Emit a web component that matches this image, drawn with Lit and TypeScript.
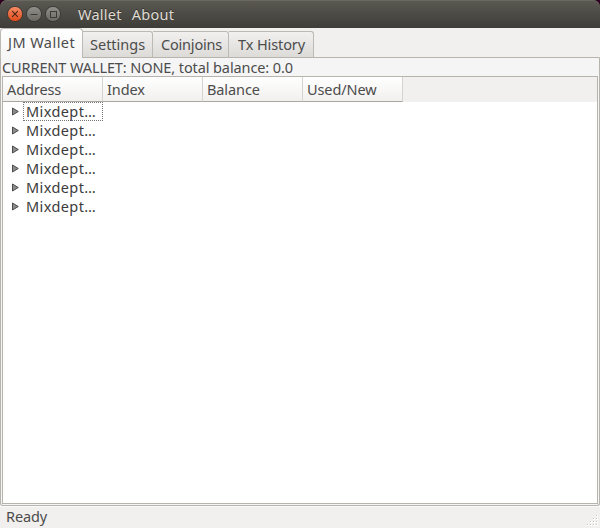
import { LitElement, html, svg, css } from "lit";
import { customElement, state } from "lit/decorators.js";
import { classMap } from "lit/directives/class-map.js";

@customElement("app-root")
class AppRoot extends LitElement {
  @state() private tab = 0;
  private tabs = [
    { label: "JM Wallet", cls: "t0" },
    { label: "Settings", cls: "t1" },
    { label: "Coinjoins", cls: "t2" },
    { label: "Tx History", cls: "t3" },
  ];
  private columns = ["Address", "Index", "Balance", "Used/New"];
  private rows = Array.from({ length: 6 }, () => "Mixdept…");

  static styles = css`
    :host { display: flex; flex-direction: column; width: 600px; height: 528px; box-sizing: border-box;
      background: #f1f0ee; color: #4c4c4c; overflow: hidden;
      font: 14.5px/19px "Noto Sans", "Open Sans", sans-serif; letter-spacing: -0.1px; white-space: nowrap; }
    * { box-sizing: border-box; }
    .corner { background: #2c001e; height: 28px; flex: none; }
    .title { height: 28px; display: flex; align-items: center; padding: 0 7px; color: #dfdbd2;
      border-radius: 7px 7px 0 0; background: linear-gradient(#5b5952, #3e3d38); box-shadow: inset 0 1px #69675f; }
    .buttons { display: flex; gap: 3px; margin-right: 17px; }
    .buttons svg { display: block; width: 16px; height: 16px; }
    .menu { display: flex; gap: 10px; text-shadow: 0 -1px #2f2e2a; letter-spacing: 0.25px; }
    .tabs { height: 30px; flex: none; display: flex; align-items: flex-end; }
    .tab { height: 27px; border: 1px solid #bdbab5; border-left-width: 0; border-bottom-color: #b7b4ad;
      background: linear-gradient(#f1f0ef, #dddbd8); padding: 3px 0 0 7px; border-radius: 0 3px 0 0; }
    .tab.on { height: 30px; padding: 4px 0 0 7px; border-left-width: 1px; border-bottom: 0;
      border-radius: 4px 4px 0 0; background: linear-gradient(#ffffff, #f5f5f5); }
    .t0 { width: 83px; letter-spacing: 0.45px; }
    .t1 { width: 70px; letter-spacing: 0; }
    .t2 { width: 76px; padding-left: 8px; letter-spacing: -0.2px; }
    .t3 { width: 85px; padding-left: 9px; }
    .rest { flex: 1; height: 1px; background: #b7b4ad; border-radius: 0 3px 0 0; }
    .pane { height: 448px; flex: none; display: flex; flex-direction: column; background: #f5f5f5;
      border: 1px solid #b7b4ad; border-top: 0; border-radius: 0 0 3px 3px; padding: 0 1px 1px; }
    .summary { height: 18px; line-height: 18px; flex: none; letter-spacing: -0.1px; }
    .tree { flex: 1; border: 1px solid #b7b4ad; background: #fff; }
    .head { height: 25px; display: flex; background: #f1f0ee; }
    .col { width: 100px; padding: 3px 0 0 4px; border-right: 1px solid #d5d3cf; border-bottom: 1px solid #aaa7a0;
      background: linear-gradient(#fff, #f1f0ee); }
    .row { height: 19px; display: flex; align-items: center; padding-left: 9px; color: #3c3c3c; }
    .row svg { width: 7px; height: 9px; flex: none; }
    .cell { width: 80px; height: 19px; margin-left: 4px; padding-left: 2px; line-height: 17px;
      letter-spacing: 0.4px; border: 1px solid transparent; }
    .cell.focus { border: 1px dotted #777; }
    .status { flex: 1; display: flex; justify-content: space-between; align-items: flex-end; padding-left: 6px;
      border-top: 1px solid #fafafa; }
    .status span { align-self: flex-start; }
    .grip { width: 12px; height: 12px; margin: 0 1px 1px 0; }
  `;

  private button(kind: string) {
    const close = kind === "close";
    const mark = close
      ? svg`<path d="M5.2 5.2 10.8 10.8M10.8 5.2 5.2 10.8" stroke="#4a2415" stroke-width="1.1"/>`
      : kind === "min"
        ? svg`<path d="M4.5 8.5H11.5" stroke="#3c3b37"/>`
        : svg`<rect x="5.5" y="5.5" width="6" height="6" fill="none" stroke="#3c3b37"/>`;
    return html`<svg viewBox="0 0 16 16">
      <defs><linearGradient id=${"fill-" + kind} x2="0" y2="1">
        <stop stop-color=${close ? "#f58d68" : "#92908a"} /><stop offset="1" stop-color=${close ? "#df4a18" : "#6a6861"} />
      </linearGradient></defs>
      <circle cx="8" cy="8" r="7.6" fill=${`url(#fill-${kind})`} stroke="#33322e" stroke-width=".8" />${mark}</svg>`;
  }

  render() {
    const dots = [[9, 0], [9, 3], [6, 3], [9, 6], [6, 6], [3, 6], [9, 9], [6, 9], [3, 9], [0, 9]];
    return html`
      <div class="corner"><div class="title">
        <div class="buttons">${["close", "min", "max"].map((k) => this.button(k))}</div>
        <div class="menu"><span>Wallet</span><span>About</span></div>
      </div></div>
      <div class="tabs">
        ${this.tabs.map((t, i) => html`<div class=${classMap({ tab: true, on: i === this.tab, [t.cls]: true })}
          @click=${() => (this.tab = i)}>${t.label}</div>`)}
        <div class="rest"></div>
      </div>
      <div class="pane">
        <div class="summary">CURRENT WALLET: NONE, total balance: 0.0</div>
        <div class="tree">
          <div class="head">${this.columns.map((c) => html`<div class="col">${c}</div>`)}</div>
          ${this.rows.map((r, i) => html`<div class="row">
            <svg viewBox="0 0 7 9"><path d="M.5 1 6.3 4.5.5 8Z" fill="#8b8b8b" stroke="#4c4c4c" /></svg>
            <div class=${classMap({ cell: true, focus: i === 0 })}>${r}</div>
          </div>`)}
        </div>
      </div>
      <div class="status"><span>Ready</span>
        <svg class="grip" viewBox="0 0 12 12">${dots.map(([x, y]) => svg`<rect x=${x} y=${y} width="2" height="2" fill="#fff"/><rect x=${x} y=${y} width="1" height="1" fill="#c4c2be"/>`)}</svg>
      </div>`;
  }
}
